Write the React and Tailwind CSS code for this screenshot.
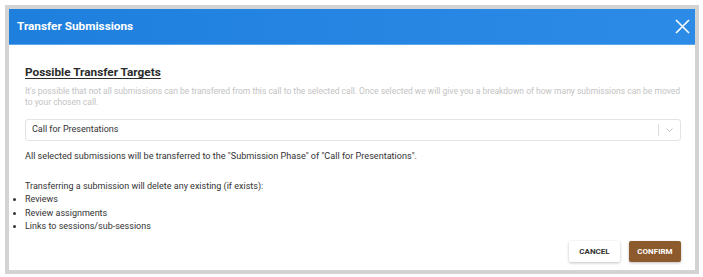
import React from "react";

function App() {
  return (
    <div className="w-[703px] h-[277px] bg-white pl-[5px] pt-[5px] pr-[4px] pb-[3px]" style={{ fontFamily: "Roboto, 'Liberation Sans', sans-serif" }}>
      <div className="h-full border-[4px] border-[#d3d3d3] flex flex-col bg-white">
        <div className="h-[36px] shrink-0 flex items-center justify-between pl-[8px] pr-[5px] bg-gradient-to-r from-[#1f7fdc] to-[#2b8be7] border-b border-[#5aa6ee]">
          <span className="text-white font-bold text-[11.8px]">Transfer Submissions</span>
          <svg width="15" height="15" viewBox="0 0 15 15" className="text-white">
            <path d="M1 1L14 14M14 1L1 14" stroke="currentColor" strokeWidth="1.6" />
          </svg>
        </div>

        <div className="flex-1 flex flex-col pl-[16px] pr-[14px] pt-[19px]">
          <h2 className="text-[11.8px] leading-[16px] font-bold text-[#2b2b2b] underline underline-offset-2">
            Possible Transfer Targets
          </h2>
          <p className="mt-[6px] text-[8.5px] leading-[11px] text-[#c3c3c3]">
            It's possible that not all submissions can be transfered from this call to the selected call. Once selected we will give you a breakdown of how many submissions can be moved to your chosen call.
          </p>

          <div className="mt-[11px] h-[22px] border border-[#e3e3e3] rounded-[3px] flex items-center pl-[6px]">
            <span className="flex-1 text-[9px] text-[#333]">Call for Presentations</span>
            <span className="w-px h-[12px] bg-[#dcdcdc]" />
            <svg width="21" height="10" viewBox="0 0 21 10" className="text-[#c4c4c4]">
              <path d="M7.5 3.5L10.5 6.5L13.5 3.5" fill="none" stroke="currentColor" strokeWidth="1" />
            </svg>
          </div>

          <p className="mt-[9px] text-[9.1px] leading-[13px] text-[#333]">
            All selected submissions will be transferred to the "Submission Phase" of "Call for Presentations".
          </p>

          <p className="mt-[17px] text-[9px] leading-[13px] text-[#333]">
            Transferring a submission will delete any existing (if exists):
          </p>
          <ul className="list-disc list-outside text-[9px] leading-[13.5px] text-[#333]">
            <li>Reviews</li>
            <li>Review assignments</li>
            <li>Links to sessions/sub-sessions</li>
          </ul>

          <div className="mt-auto mb-[8px] flex justify-end gap-[9px]">
            <button className="h-[21px] w-[51px] bg-white rounded-[2px] shadow-[0_1px_3px_rgba(0,0,0,0.25)] text-[8px] font-bold text-[#333]">
              CANCEL
            </button>
            <button className="h-[21px] w-[52px] bg-[#8c5a2c] rounded-[2px] shadow-[0_1px_3px_rgba(0,0,0,0.25)] text-[8px] font-bold text-white">
              CONFIRM
            </button>
          </div>
        </div>
      </div>
    </div>
  );
}

export default App;
